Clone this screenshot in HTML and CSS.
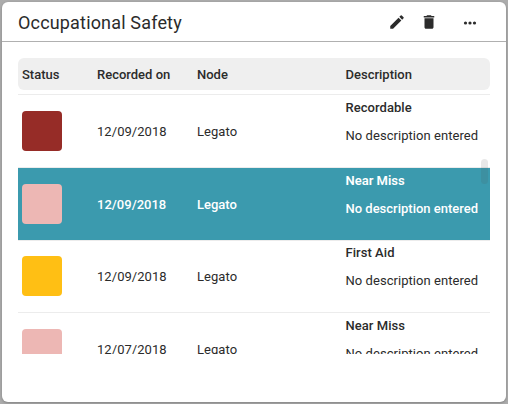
FILE: index.html
```html
<!DOCTYPE html>
<html lang="en">
<head>
<meta charset="utf-8">
<title>Occupational Safety</title>
<link rel="stylesheet" href="styles.css">
</head>
<body>
<section class="card">
  <header class="card-header">
    <h1 class="title">Occupational Safety</h1>
    <div class="actions">
      <svg class="icon" viewBox="0 0 24 24"><path d="M3 17.25V21h3.75L17.81 9.94l-3.75-3.75L3 17.25zM20.71 7.04a1 1 0 0 0 0-1.41l-2.34-2.34a1 1 0 0 0-1.41 0l-1.83 1.83 3.75 3.75 1.83-1.83z"/></svg>
      <svg class="icon" viewBox="0 0 24 24"><path d="M6 19c0 1.1.9 2 2 2h8c1.100 0 2-.9 2-2V7H6v12zM19 4h-3.500l-1-1h-5l-1 1H5v2h14V4z"/></svg>
      <svg class="icon more" viewBox="0 0 18 18"><circle cx="4.500" cy="9" r="1.600"/><circle cx="9" cy="9" r="1.600"/><circle cx="13.500" cy="9" r="1.600"/></svg>
    </div>
  </header>
  <div class="content">
    <div class="columns table-head">
      <span>Status</span><span>Recorded on</span><span>Node</span><span>Description</span>
    </div>
    <div class="list">
      <div class="columns row">
        <span class="status recordable"></span><span class="cell">12/09/2018</span><span class="cell">Legato</span>
        <div class="description"><strong>Recordable</strong><span>No description entered</span></div>
      </div>
      <div class="columns row selected">
        <span class="status near-miss"></span><span class="cell">12/09/2018</span><span class="cell">Legato</span>
        <div class="description"><strong>Near Miss</strong><span>No description entered</span></div>
      </div>
      <div class="columns row">
        <span class="status first-aid"></span><span class="cell">12/09/2018</span><span class="cell">Legato</span>
        <div class="description"><strong>First Aid</strong><span>No description entered</span></div>
      </div>
      <div class="columns row">
        <span class="status near-miss"></span><span class="cell">12/07/2018</span><span class="cell">Legato</span>
        <div class="description"><strong>Near Miss</strong><span>No description entered</span></div>
      </div>
      <div class="scroll-thumb"></div>
    </div>
  </div>
</section>
</body>
</html>
```
FILE: styles.css
```css
* { box-sizing: border-box; }

body {
  margin: 0;
  padding: 2px;
  height: 404px;
  background: #acacac;
  font-family: Roboto, "Liberation Sans", sans-serif;
  font-size: 13px;
  color: #2b2b2b;
  overflow: hidden;
}

.card {
  height: 400px;
  background: #fff;
  border-radius: 6px;
  box-shadow: 0 1px 3px rgba(0, 0, 0, 0.25);
}

.card-header {
  display: flex;
  align-items: center;
  justify-content: space-between;
  height: 40px;
  padding: 0 27px 0 16px;
  border-bottom: 1px solid #b0b0b0;
}

.title {
  margin: 2px 0 0;
  font-size: 18px;
  font-weight: 400;
  line-height: 24px;
  letter-spacing: 0.17px;
}

.actions {
  display: flex;
  gap: 14px;
  padding-top: 1px;
}

.icon {
  display: block;
  width: 18px;
  height: 18px;
  fill: #2b2b2b;
}

.more {
  margin-left: 9px;
  position: relative;
  top: 1px;
}

.content { padding: 16px; }

.columns {
  display: grid;
  grid-template-columns: 75px 100px 148.5px 1fr;
  align-items: center;
  padding-left: 4px;
}

.table-head {
  height: 32px;
  background: #efefef;
  border-radius: 6px;
  font-weight: 500;
}

.list {
  position: relative;
  height: 259.600px;
  margin-top: 4.400px;
  overflow: hidden;
}

.row {
  height: 72.600px;
  border-top: 1px solid #ececec;
  letter-spacing: 0.05px;
}

.cell { padding-top: 0.8px; }

.status {
  width: 40px;
  height: 40px;
  border-radius: 4px;
}

.recordable { background: #962c27; }
.near-miss { background: #edb7b4; }
.first-aid { background: #ffbf14; }

.selected {
  background: #3b9aae;
  color: #fff;
  font-weight: 500;
  letter-spacing: 0;
}

.description {
  display: flex;
  flex-direction: column;
  align-self: start;
  gap: 12px;
  padding-top: 4.700px;
  line-height: 16px;
}

.description strong { font-weight: 500; }
.selected strong { font-weight: 600; }

.scroll-thumb {
  position: absolute;
  top: 64.600px;
  right: 2px;
  width: 7px;
  height: 25px;
  border-radius: 4px;
  background: rgba(80, 80, 80, 0.13);
}
```
